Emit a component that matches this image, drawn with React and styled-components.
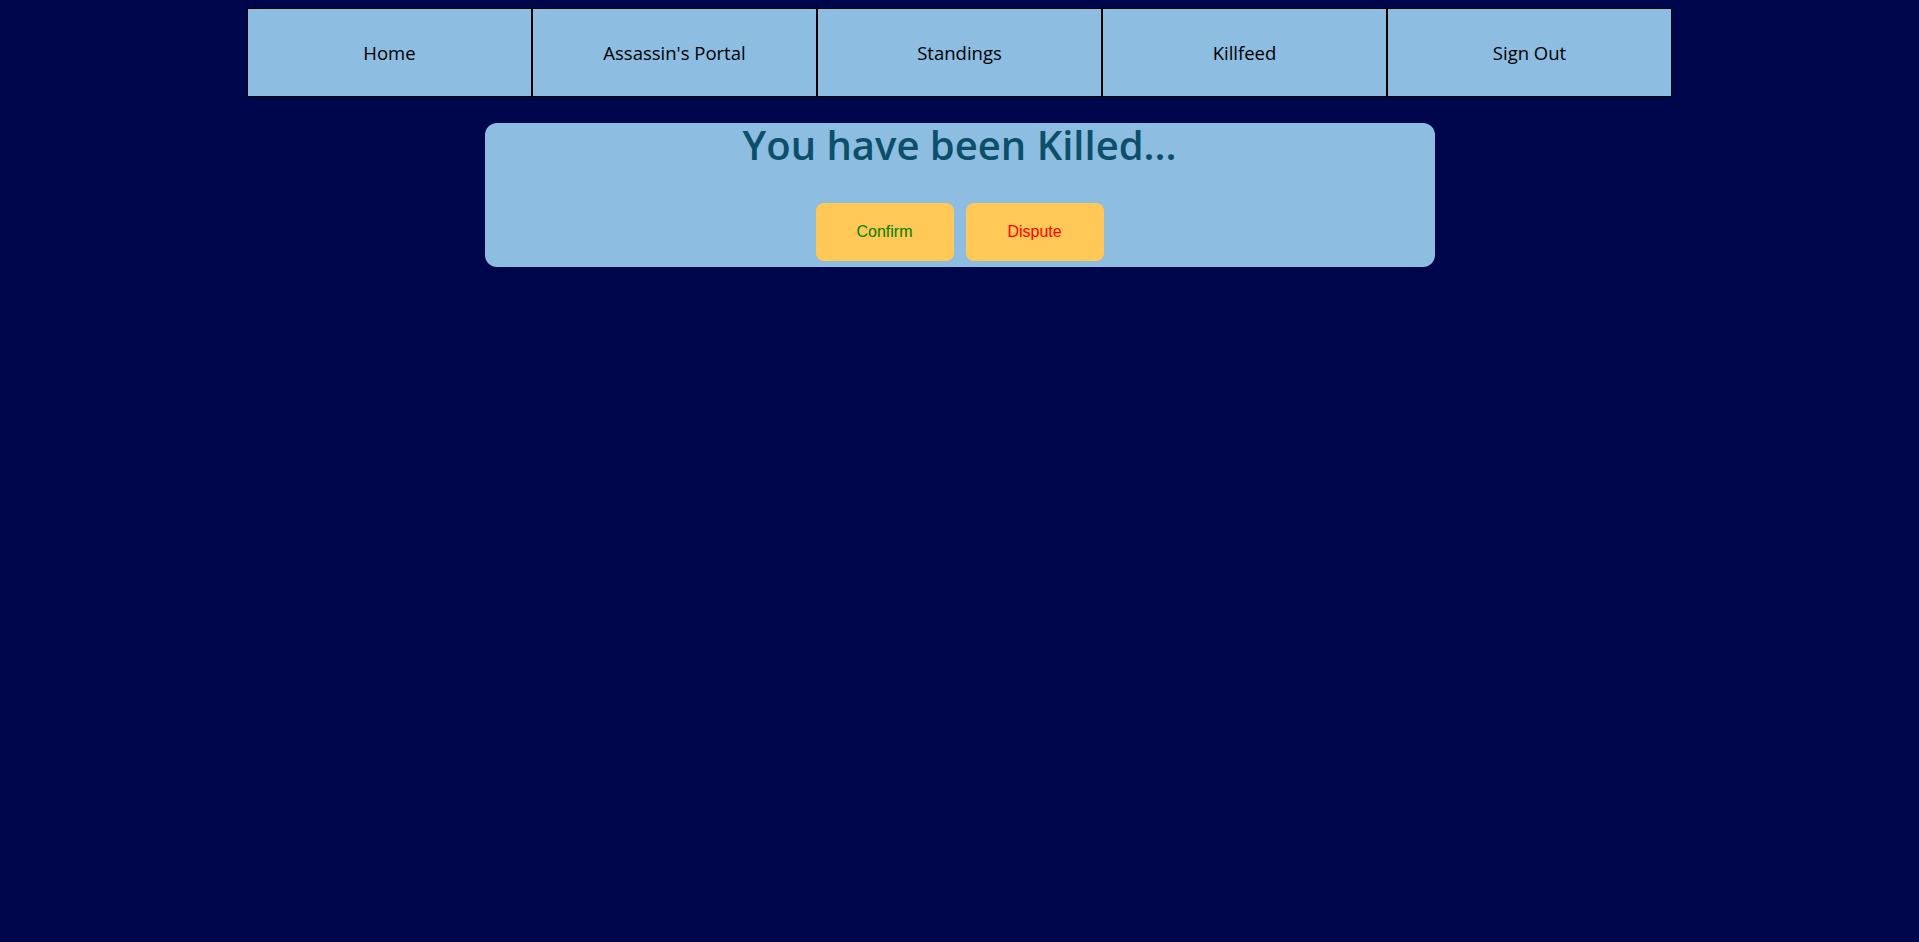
import styled, { createGlobalStyle } from 'styled-components';

const GlobalStyle = createGlobalStyle`
  body {
    margin: 8px;
    background-color: #00064c;
    font-family: 'Trebuchet MS', 'Open Sans', sans-serif;
  }
`;

const links = ['Home', "Assassin's Portal", 'Standings', 'Killfeed', 'Sign Out'];

const App = () => {
  return (
    <>
      <GlobalStyle />
      <Nav>
        {links.map((label) => (
          <NavItem key={label}>{label}</NavItem>
        ))}
      </Nav>

      <Card>
        <Title>You have been Killed...</Title>
        <Actions>
          <ActionButton $color="#008000">Confirm</ActionButton>
          <ActionButton $color="#ff0000">Dispute</ActionButton>
        </Actions>
      </Card>
    </>
  );
};

const Nav = styled.nav`
  display: flex;
  width: 1425px;
  margin: 0 auto;
`;

const NavItem = styled.a`
  flex: 1;
  display: flex;
  align-items: center;
  justify-content: center;
  height: 87px;
  background-color: #8dbde0;
  border: 1px solid #000;
  color: #000;
  font-family: 'Open Sans', sans-serif;
  font-size: 18.5px;
  cursor: pointer;
`;

const Card = styled.section`
  width: 950px;
  margin: 26px auto 0;
  padding-bottom: 6px;
  background-color: #8dbde0;
  border-radius: 12px;
  text-align: center;
`;

const Title = styled.h1`
  margin: 0;
  color: #0c4f6b;
  font-family: 'Open Sans', sans-serif;
  font-size: 40px;
  font-weight: 600;
  line-height: 44px;
`;

const Actions = styled.div`
  display: flex;
  justify-content: center;
  gap: 12px;
  margin-top: 36px;
`;

const ActionButton = styled.button`
  width: 138px;
  height: 58px;
  background-color: #ffc857;
  border: none;
  border-radius: 8px;
  color: ${(p) => p.$color};
  font-family: 'Liberation Sans', Arial, sans-serif;
  font-size: 16px;
  cursor: pointer;
`;

export default App;
